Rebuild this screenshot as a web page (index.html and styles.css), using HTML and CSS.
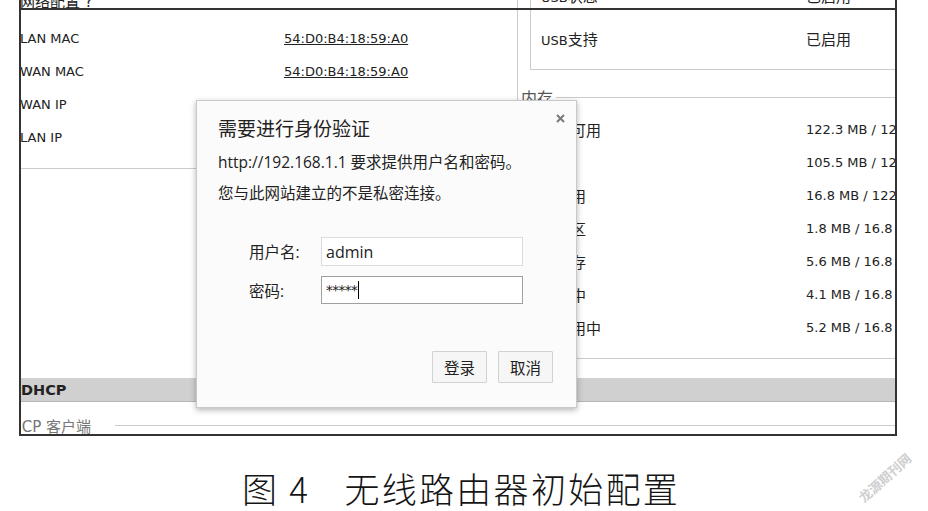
FILE: index.html
```html
<!DOCTYPE html>
<html lang="zh-CN">

<head>
  <meta charset="UTF-8">
  <meta name="viewport" content="width=device-width, initial-scale=1.0">
  <title>图 4 无线路由器初始配置</title>

  <link rel="stylesheet" href="styles.css">
</head>

<body>
  <div class="sheet">

    <div class="shot">
      <div class="cols">

        <div class="col-left">
          <div class="row cut"><span class="key zh">网络配置 ?</span></div>
          <div class="row"><span class="key">LAN MAC</span><span class="val link">54:D0:B4:18:59:A0</span></div>
          <div class="row"><span class="key">WAN MAC</span><span class="val link">54:D0:B4:18:59:A0</span></div>
          <div class="row"><span class="key">WAN IP</span><span class="val">0.0.0.0</span></div>
          <div class="row"><span class="key">LAN IP</span><span class="val">192.168.1.1</span></div>
          <div class="rule"></div>
        </div>

        <div class="col-right">
          <div class="usb">
            <div class="row cut"><span class="key">USB<span class="zh">状态</span></span><span class="val zh">已启用</span></div>
            <div class="row"><span class="key">USB<span class="zh">支持</span></span><span class="val zh">已启用</span></div>
          </div>

          <div class="legend"><span>内存</span></div>

          <div class="mem">
            <div class="row"><span class="key zh">总计可用</span><span class="val">122.3 MB / 122.3 MB</span></div>
            <div class="row"><span class="key zh">空闲</span><span class="val">105.5 MB / 122.3 MB</span></div>
            <div class="row"><span class="key zh">已使用</span><span class="val">16.8 MB / 122.3 MB</span></div>
            <div class="row"><span class="key zh">缓冲区</span><span class="val">1.8 MB / 16.8 MB</span></div>
            <div class="row"><span class="key zh">已缓存</span><span class="val">5.6 MB / 16.8 MB</span></div>
            <div class="row"><span class="key zh">活动中</span><span class="val">4.1 MB / 16.8 MB</span></div>
            <div class="row"><span class="key zh">非活用中</span><span class="val">5.2 MB / 16.8 MB</span></div>
          </div>
        </div>

      </div>

      <div class="bar">DHCP</div>
      <div class="legend sub"><span>DHCP 客户端</span></div>
    </div>

    <p class="caption"><span class="fig">图 4</span><span>无线路由器初始配置</span></p>
    <span class="mark">龙源期刊网</span>

    <div class="auth">
      <svg class="close" width="9" height="9" viewBox="0 0 9 9">
        <path d="M1 1 L8 8 M8 1 L1 8" stroke="#7a7a7a" stroke-width="2" />
      </svg>
      <h2>需要进行身份验证</h2>
      <div class="msg">
        <p>http://192.168.1.1 要求提供用户名和密码。</p>
        <p>您与此网站建立的不是私密连接。</p>
      </div>
      <div class="form">
        <div class="field-row">
          <label>用户名:</label>
          <div class="field">admin</div>
        </div>
        <div class="field-row">
          <label>密码:</label>
          <div class="field focus"><span class="stars">*****</span><span class="caret"></span></div>
        </div>
      </div>
      <div class="actions">
        <button>登录</button>
        <button>取消</button>
      </div>
    </div>

  </div>
</body>

</html>
```

FILE: styles.css
```css
body {
  margin: 0;
  background-color: #fff;
  color: #222;
  font-family: 'DejaVu Sans', 'Noto Sans CJK SC', sans-serif;
}

.sheet {
  position: relative;
  width: 928px;
  height: 511px;
  overflow: hidden;
}

/* the screenshot frame */
.shot {
  position: relative;
  margin-left: 19px;
  width: 874px;
  height: 434px;

  border: 2px solid #333;
  border-top: none;
  overflow: hidden;

  font-size: 13px;
}

.shot::before {
  content: "";
  position: absolute;
  top: 8px;
  left: 0;
  right: 0;
  height: 2px;
  background-color: #333;
  z-index: 1;
}

.zh {
  font-size: 15px;
}

.cols {
  display: grid;
  grid-template-columns: 496px 1fr;
  height: 389px;
  margin-top: -11px;
}

.row {
  display: flex;
  align-items: center;
  height: 33px;
  white-space: nowrap;
}

/* rows scrolled half out of view */
.col-left .row.cut {
  align-items: flex-start;
  padding-top: 5px;
  height: 28px;
  line-height: 17px;
}

.usb .row.cut {
  align-items: flex-start;
  line-height: 16px;
}

.col-left .key {
  width: 264px;
  margin-left: -1px;
}

.val.link {
  text-decoration: underline;
}

.rule {
  margin-top: 14px;
  border-top: 1px solid #ccc;
}

.col-right {
  border-left: 1px solid #ccc;
}

.usb {
  margin-left: 12px;
  padding: 0 0 14px 10px;

  border-left: 1px solid #ccc;
  border-bottom: 1px solid #ccc;
}

.usb .key,
.mem .key {
  width: 265px;
  flex-shrink: 0;
}

.legend {
  display: flex;
  align-items: center;

  height: 32px;
  margin-top: 11px;
  padding-left: 3px;

  color: #555;
  font-size: 16px;
  white-space: nowrap;
}

.legend::after {
  content: "";
  flex: 1;
  margin-left: 3px;
  border-top: 1px solid #ccc;
}

.mem {
  margin-left: 12px;
  padding: 0 0 14px 11px;
  border-bottom: 1px solid #ccc;
}

.bar {
  display: flex;
  align-items: center;

  height: 23px;
  border-bottom: 1px solid #b5b5b5;
  background-color: #d0d0d0;

  font-size: 14.5px;
  font-weight: bold;
}

.legend.sub {
  height: 18px;
  margin-top: 14px;
  padding-left: 0;

  color: #777;
  font-size: 15px;
}

.legend.sub span {
  margin-left: -22px;
}

.legend.sub::after {
  margin-left: 24px;
}

/* figure caption */
.caption {
  display: flex;
  align-items: center;

  height: 40px;
  margin: 31px 0 0;
  padding-left: 242px;

  color: #151515;
  font-family: 'Noto Sans CJK SC', sans-serif;
  font-size: 35px;
  font-weight: 300;
  letter-spacing: 2.3px;
}

.caption .fig {
  margin-right: 34px;
}

.mark {
  position: absolute;
  left: 852px;
  top: 468px;

  color: #cfcfcf;
  font-family: 'Noto Sans CJK SC', sans-serif;
  font-size: 13px;
  font-weight: bold;

  transform: rotate(-42deg);
}

/* login dialog */
.auth {
  position: absolute;
  left: 196px;
  top: 100px;

  display: flex;
  flex-direction: column;

  width: 379px;
  height: 306px;
  box-sizing: content-box;

  background-color: #fbfbfb;
  border: 1px solid #c9c9c9;
  box-shadow: 0 2px 6px rgba(0, 0, 0, 0.3);

  font-family: 'Open Sans', 'Noto Sans CJK SC', sans-serif;
  font-size: 15.5px;
  color: #222;
}

.close {
  position: absolute;
  top: 13px;
  right: 11px;
}

.auth h2 {
  margin: 14px 0 0 21px;

  font-size: 19px;
  font-weight: normal;
  line-height: 28px;
}

.msg {
  margin: 4px 0 0 21px;
}

.msg p {
  margin: 0;
  line-height: 31px;
}

.form {
  display: flex;
  flex-direction: column;
  gap: 10px;

  margin: 28px 0 0 52px;
}

.field-row {
  display: flex;
  align-items: center;
}

.field-row label {
  width: 72px;
}

.field {
  display: flex;
  align-items: center;

  width: 202px;
  height: 29px;
  box-sizing: border-box;
  padding-left: 4px;

  background-color: #fff;
  border: 1px solid #dcdcdc;

  font-size: 16px;
}

.field.focus {
  height: 28px;
  border-color: #a0a0a0;
}

.stars {
  font-family: 'DejaVu Sans', sans-serif;
  font-size: 13.5px;
  letter-spacing: -0.5px;
}

.caret {
  width: 1px;
  height: 18px;
  margin-left: 1px;
  background-color: #000;
}

.actions {
  display: flex;
  justify-content: flex-end;
  gap: 11px;

  margin-top: auto;
  padding: 0 23px 24px 0;
}

.actions button {
  width: 55px;
  height: 32px;

  background-color: #f6f6f6;
  border: 1px solid #d2d2d2;
  border-radius: 1px;

  color: #222;
  font-family: 'Noto Sans CJK SC', sans-serif;
  font-size: 15.5px;
}
```
